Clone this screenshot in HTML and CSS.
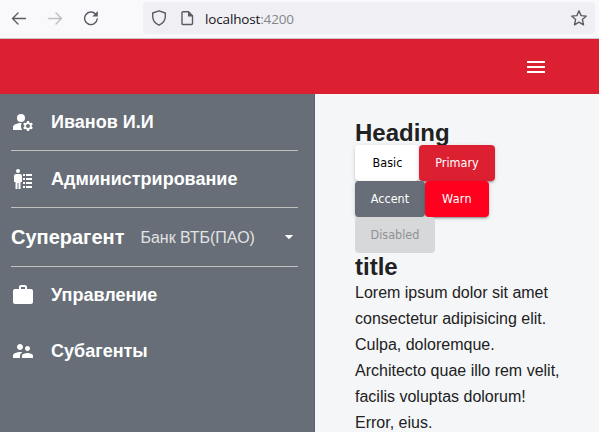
FILE: index.html
```html
<!DOCTYPE html>
<html lang="ru">
<head>
<meta charset="utf-8">
<title>localhost:4200</title>
<link rel="stylesheet" href="styles.css">
</head>
<body>
<div class="browser">
  <svg class="nav" width="16" height="16" viewBox="0 0 16 16"><path d="M14.500 8.500H1.500M7 3L1.500 8.500 7 14"/></svg>
  <svg class="nav nav-off" width="16" height="16" viewBox="0 0 16 16"><path d="M1.500 8.500H14.500M9 3l5.500 5.500L9 14"/></svg>
  <svg class="nav" width="16" height="16" viewBox="0 0 16 16"><path d="M14.200 9A6.300 6.300 0 1 1 12.700 4.200"/><path class="fill" d="M14.800 1v5.500H9.300z"/></svg>
  <div class="address">
    <svg class="nav" width="16" height="16" viewBox="0 0 16 16"><path d="M8 .8L14.300 3v3.500c0 4-2.300 6.800-6.300 8.700C4 13.300 1.700 10.500 1.700 6.500V3z"/></svg>
    <svg class="nav page" width="14" height="16" viewBox="0 0 14 16"><path d="M3 1.700h5.500L12.500 5.700v7.800a1 1 0 0 1-1 1h-8.500a1 1 0 0 1-1-1V2.700a1 1 0 0 1 1-1z"/><path class="fill" d="M8 1.500v5h5z"/></svg>
    <span class="url">localhost<span class="port">:4200</span></span>
    <svg class="nav star" width="18" height="18" viewBox="0 0 18 18"><path d="M9 1.800l2.100 4.800 5.200.5-3.900 3.500 1.100 5.200L9 13.100l-4.500 2.700 1.100-5.200L1.700 7.100l5.200-.5z"/></svg>
  </div>
</div>
<header class="toolbar">
  <svg width="24" height="24" viewBox="0 0 24 24"><path d="M3 18h18v-2H3v2zm0-5h18v-2H3v2zm0-7v2h18V6H3z"/></svg>
</header>
<div class="layout">
  <nav class="sidebar">
    <a class="item ruled">
      <svg width="24" height="24" viewBox="0 0 24 24"><circle cx="10" cy="8" r="4"/><path d="M10.670 13.020C10.450 13.010 10.230 13 10 13c-2.420 0-4.680.67-6.610 1.820-.88.52-1.390 1.500-1.390 2.530V20h9.260c-.79-1.130-1.260-2.510-1.260-4 0-1.070.25-2.070.67-2.980zM20.750 16c0-.22-.03-.42-.06-.63l1.140-1.010-1-1.730-1.450.49c-.32-.27-.68-.48-1.080-.63L18 11h-2l-.3 1.490c-.4.15-.76.36-1.080.63l-1.450-.49-1 1.730 1.140 1.010c-.03.21-.06.41-.06.63s.03.42.06.63l-1.140 1.010 1 1.730 1.450-.49c.32.27.68.48 1.080.63L16 21h2l.3-1.490c.4-.15.76-.36 1.080-.63l1.450.49 1-1.730-1.140-1.010c.03-.21.06-.41.06-.63zM17 18c-1.100 0-2-.9-2-2s.9-2 2-2 2 .9 2 2-.9 2-2 2z"/></svg>
      <span>Иванов И.И</span>
    </a>
    <a class="item ruled">
      <svg width="24" height="24" viewBox="0 0 24 24"><circle cx="7" cy="4" r="2"/><path d="M5 7h4a2 2 0 0 1 2 2v6H9.500v7h-2v-6h-1v6h-2v-7H3V9a2 2 0 0 1 2-2zM12 7h2v2h-2zM15 7h6v2h-6zM12 11h2v2h-2zM15 11h6v2h-6zM12 15h2v2h-2zM15 15h6v2h-6zM12 19h2v2h-2zM15 19h6v2h-6z"/></svg>
      <span>Администрирование</span>
    </a>
    <div class="agent ruled">
      <span class="agent-label">Суперагент</span>
      <span class="agent-value">Банк ВТБ(ПАО)</span>
      <svg class="arrow" width="10" height="5" viewBox="0 0 10 5"><path d="M.8 0h8.400L5 4.300z"/></svg>
    </div>
    <a class="item">
      <svg width="24" height="24" viewBox="0 0 24 24"><path d="M20 6h-4V4c0-1.110-.89-2-2-2h-4c-1.110 0-2 .89-2 2v2H4c-1.110 0-1.990.89-1.990 2L2 19c0 1.110.89 2 2 2h16c1.110 0 2-.89 2-2V8c0-1.110-.89-2-2-2zm-6 0h-4V4h4v2z"/></svg>
      <span>Управление</span>
    </a>
    <a class="item">
      <svg width="24" height="24" viewBox="0 0 24 24"><path d="M16.500 12c1.380 0 2.490-1.120 2.490-2.500S17.880 7 16.500 7C15.120 7 14 8.120 14 9.500s1.120 2.500 2.500 2.500zM9 11c1.660 0 2.990-1.340 2.990-3S10.660 5 9 5C7.340 5 6 6.340 6 8s1.340 3 3 3zm7.500 3c-1.830 0-5.500.92-5.500 2.750V19h11v-2.250c0-1.830-3.670-2.750-5.500-2.750zM9 13c-2.330 0-7 1.170-7 3.500V19h7v-2.250c0-.85.33-2.340 2.370-3.470C10.500 13.100 9.660 13 9 13z"/></svg>
      <span>Субагенты</span>
    </a>
  </nav>
  <main class="content">
    <h2 class="heading">Heading</h2>
    <div class="buttons">
      <button class="btn basic">Basic</button><button class="btn primary">Primary</button><button class="btn accent">Accent</button><button class="btn warn">Warn</button><button class="btn disabled" disabled>Disabled</button>
    </div>
    <h2>title</h2>
    <p>Lorem ipsum dolor sit amet consectetur adipisicing elit. Culpa, doloremque. Architecto quae illo rem velit, facilis voluptas dolorum! Error, eius.</p>
  </main>
</div>
</body>
</html>
```
FILE: styles.css
```css
* { box-sizing: border-box; }
body {
  margin: 0;
  height: 432px;
  overflow: hidden;
  display: flex;
  flex-direction: column;
  background: #f5f6f8;
  color: #212121;
  font-family: "Liberation Sans", Arial, sans-serif;
}
.browser {
  flex: none;
  height: 39px;
  display: flex;
  align-items: center;
  gap: 20px;
  padding: 0 4px 2px 11px;
  background: #f9f9fb;
  border-bottom: 1px solid #c8c8cc;
}
.nav { flex: none; fill: none; stroke: #5b5b66; stroke-width: 1.4; stroke-linecap: round; stroke-linejoin: round; }
.nav .fill { fill: #5b5b66; stroke: none; }
.nav-off { stroke: #bebec3; }
.address {
  flex: 1;
  height: 32px;
  margin-left: 24px;
  padding: 0 7px 0 8px;
  display: flex;
  align-items: center;
  background: #f0f0f4;
  border-radius: 4px;
}
.page { margin: 0 11px 0 13px; }
.url { font: 13.5px/20px "Open Sans", "Noto Sans", sans-serif; letter-spacing: -.15px; color: #15141a; padding-top: 1px; }
.port { color: #85858c; }
.star { margin-left: auto; }
.toolbar {
  flex: none;
  height: 55px;
  display: flex;
  align-items: center;
  justify-content: flex-end;
  padding-right: 51px;
  background: #dc2032;
}
.toolbar svg { fill: #fff; }
.layout { flex: 1; min-height: 0; display: flex; }
.sidebar {
  width: 315px;
  flex: none;
  padding: 0 16px 0 11px;
  background: #676e77;
  border-right: 1px solid #59616c;
  color: #fff;
}
.sidebar svg { fill: #fff; flex: none; }
.item {
  height: 56px;
  display: flex;
  align-items: center;
  gap: 16px;
  font-size: 18px;
  font-weight: 700;
}
.ruled { box-sizing: content-box; border-bottom: 1px solid #c1c1be; }
.agent { height: 58px; display: flex; align-items: center; }
.agent-label { font-size: 20px; font-weight: 700; margin-right: 16px; }
.agent-value { font-size: 16px; color: #e1e2e4; padding-top: 1px; }
.sidebar .arrow { margin: 0 4px 0 auto; }
.content { flex: 1; padding: 24px 36px 0 40px; }
h2 { margin: 0; font-size: 24px; line-height: 27px; height: 27px; }
.heading { line-height: 29px; }
.buttons { position: relative; display: flex; flex-wrap: wrap; width: 150px; }
.btn {
  height: 36px;
  padding: 0;
  border: 0;
  border-radius: 4px;
  color: #fff;
  font: 12.500px/36px "DejaVu Sans Condensed", "DejaVu Sans", sans-serif;
  box-shadow: 0 3px 1px -2px rgba(0,0,0,.2), 0 2px 2px rgba(0,0,0,.14), 0 1px 5px rgba(0,0,0,.12);
}
.basic { width: 64px; padding-left: 1px; background: #fff; color: #000; }
.primary { width: 76px; background: #dc2032; }
.accent { width: 70px; background: #676e77; }
.warn { width: 64px; background: #ff001f; letter-spacing: .3px; }
.disabled { width: 80px; background: #d7d8da; color: #909192; box-shadow: none; }
p { margin: 0; font-size: 16px; line-height: 26px; }
```
